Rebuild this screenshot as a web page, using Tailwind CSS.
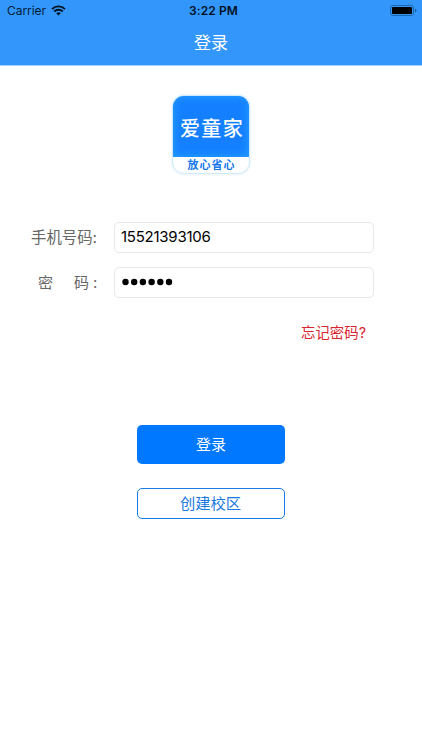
<!DOCTYPE html>
<html lang="zh-CN">
<head>
<meta charset="utf-8">
<meta name="viewport" content="width=device-width, initial-scale=1">
<title>登录</title>
<script src="https://cdn.jsdelivr.net/npm/@tailwindcss/browser@4"></script>
</head>
<body class="h-[750px] overflow-hidden bg-white font-['Inter','Noto_Sans_CJK_SC',sans-serif]">
<header class="h-[66px] border-b border-[#a3cffb] bg-[#3396fa]">
  <div class="grid h-[22px] grid-cols-3 items-center pl-[7px] pr-[5px] text-black">
    <div class="flex items-center gap-[5px]">
      <span class="w-[39px] text-[12px] leading-[22px] tracking-[-0.05px] text-[#061d38]">Carrier</span>
      <svg class="mb-px h-[11px] w-[15px]" viewBox="0 0 15 11" fill="none" stroke="#03101f" stroke-width="1.9">
        <path d="M1 4.1a9.2 9.2 0 0 1 13 0M3.3 6.5a5.9 5.9 0 0 1 8.4 0"/>
        <path d="M7.5 10.5 5.3 8.3a3.1 3.1 0 0 1 4.4 0z" fill="#03101f" stroke="none"/>
      </svg>
    </div>
    <span class="pl-[3px] text-center text-[12px] font-semibold leading-[22px] tracking-[0.1px] text-[#03101f]">3:22 PM</span>
    <svg class="mb-px h-[11px] w-[27px] justify-self-end" viewBox="0 0 27 11">
      <rect x="0.5" y="0.5" width="23" height="10" rx="2.5" fill="none" stroke="#1e66ad"/>
      <rect x="2" y="2" width="20" height="7" rx="1" fill="#000"/>
      <path d="M25 3.8q1.5.5 1.5 1.7T25 7.2z" fill="#1e5a96"/>
    </svg>
  </div>
  <h1 class="text-center text-[17px] leading-[42px] text-white">登录</h1>
</header>
<main class="flex flex-col items-center">
  <div class="mt-[29px] flex h-[79px] w-[78px] flex-col overflow-hidden rounded-[12px] border border-[#cfeafa] bg-white shadow-[0_0_3px_#d3eafa]">
    <div class="flex h-[61px] items-center justify-center bg-[#1480ff] pt-[4px] pl-[2px] text-[20px] font-medium leading-[30px] tracking-[1.4px] text-white shadow-[inset_0_0_9px_#28a4ff]">爱童家</div>
    <div class="flex h-[16px] items-center justify-center pl-px text-[11px] font-bold leading-[16px] tracking-[1px] text-[#1678ec]">放心省心</div>
  </div>
  <form class="mt-[48px] flex w-full flex-col gap-[14px] pl-[31px] pr-[48px]">
    <div class="flex h-[31px] items-center">
      <label class="w-[83px] pt-px text-[15.4px] leading-[30px] text-[#666]">手机号码:</label>
      <div class="flex h-[31px] flex-1 items-center rounded-[5px] border border-[#e8e8e8] pl-[6px] text-[15px] tracking-[-0.25px] text-black">15521393106</div>
    </div>
    <div class="flex h-[31px] items-center">
      <label class="flex w-[83px] pl-[7px] text-[15px] leading-[30px] text-[#666]"><span class="w-[36px]">密</span><span class="w-[19px]">码</span><span>:</span></label>
      <div class="flex h-[31px] flex-1 items-center rounded-[5px] border border-[#e8e8e8] pb-px pl-[7px]">
        <svg class="h-[8px] w-[52px]" viewBox="0 0 52 8"><circle cx="3.5" cy="4" r="3.2"/><circle cx="12.2" cy="4" r="3.2"/><circle cx="20.9" cy="4" r="3.2"/><circle cx="29.6" cy="4" r="3.2"/><circle cx="38.3" cy="4" r="3.2"/><circle cx="47" cy="4" r="3.2"/></svg>
      </div>
    </div>
  </form>
  <a class="mt-[25px] mr-[56px] self-end text-[14.4px] leading-[20px] text-[#d9262e]">忘记密码?</a>
  <button class="mt-[82px] h-[39px] w-[148px] rounded-[5px] bg-[#0078ff] pt-px text-[15px] text-white">登录</button>
  <button class="mt-[24px] h-[31px] w-[148px] rounded-[5px] border border-[#1a7be8] pr-px text-[15.3px] leading-[29px] text-[#1a78e0]">创建校区</button>
</main>
</body>
</html>
